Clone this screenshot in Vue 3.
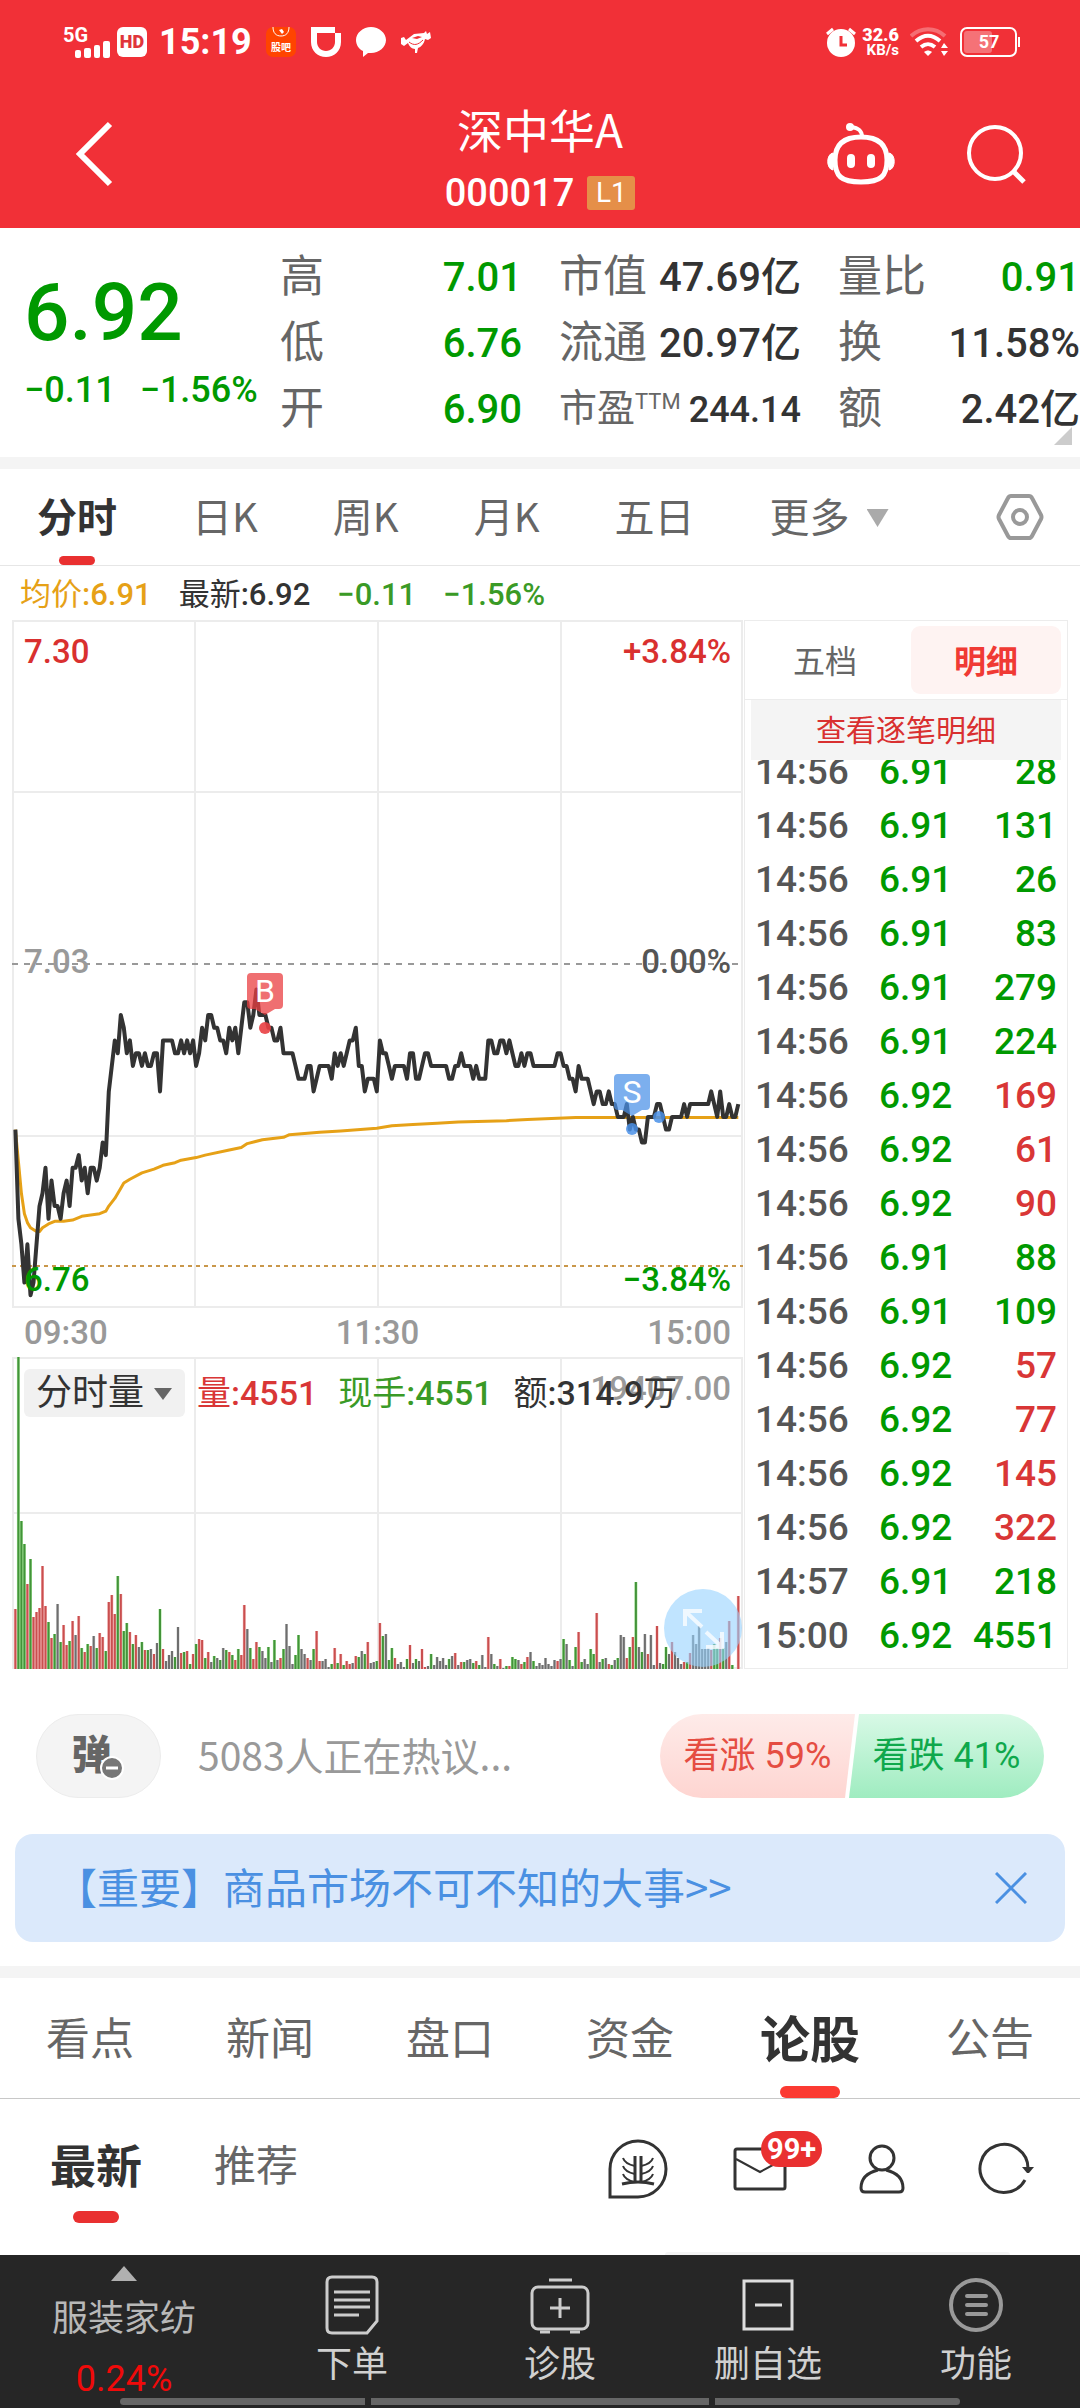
<template>
  <div class="page">
    <header class="header">
      <div class="status">
        <svg class="signal" viewBox="0 0 48 36" aria-label="5G">
          <text x="0" y="18" class="signal-text">5G</text>
          <rect x="12" y="26" width="6" height="8" rx="2" />
          <rect x="21" y="24" width="7" height="10" rx="2" />
          <rect x="31" y="21" width="6" height="13" rx="2" />
          <rect x="40" y="17" width="7" height="17" rx="2" />
        </svg>
        <span class="hd">HD</span>
        <span class="clock">15:19</span>
        <svg class="app" viewBox="0 0 30 30">
          <rect width="30" height="30" rx="7" fill="#ff4400" />
          <path d="M7 0c0 6 3 9 8 9s8-3 8-9" fill="none" stroke="#fff" stroke-width="1" />
          <path d="M13 3l3-1 2 3-2 2z" fill="#fff" />
          <text x="15" y="24" class="app-text">股吧</text>
        </svg>
        <svg class="app" viewBox="0 0 30 30">
          <path d="M0 0h24v6h6v9c0 9-7 15-15 15S0 24 0 15zM6 6v9c0 5 4 9 9 9s9-4 9-9V6z" fill="#fff" fill-rule="evenodd" />
        </svg>
        <svg class="app" viewBox="0 0 30 30">
          <path d="M15 0c8 0 15 6 15 13s-7 13-15 13c-1 0-2 0-3 0l-5 4v-6C3 22 0 18 0 13 0 6 7 0 15 0z" fill="#fff" />
        </svg>
        <svg class="app" viewBox="0 0 30 30">
          <path d="M0 11l3-1 2 3 8-6 10-1 2-2 1 3 3-2 1 6-3 2-3-1c-1 5-4 8-7 9l-1 5h-2v-4c-3 0-6-3-7-6l-4 3-3-2z" fill="#fff" />
          <path d="M11 11l6-2 4 1-5 2z" fill="#f13037" />
          <path d="M8 15c5 4 9 3 14-2" fill="none" stroke="#f13037" stroke-width="1" />
        </svg>
        <div class="status-right">
          <svg class="app" viewBox="0 0 30 30">
            <circle cx="15" cy="16" r="14" fill="#fff" />
            <path d="M1 7l6-5M29 7l-6-5" stroke="#fff" stroke-width="3" />
            <path d="M15 9v9h6" fill="none" stroke="#f13037" stroke-width="3" />
          </svg>
          <span class="speed"><b>32.6</b><small>KB/s</small></span>
          <svg class="wifi" viewBox="0 0 38 30" fill="none" stroke-width="4">
            <path d="M1 9c10-9 24-9 34 0" stroke="#fff" opacity=".3" />
            <path d="M6 14c8-7 16-7 24 0M11 20c5-4 9-4 14 0" stroke="#fff" />
            <path d="M14 25c3-2 5-2 8 0l-4 4z" fill="#fff" />
            <path d="M31 21l3-5 4 5zM31 24h7l-4 5z" fill="#fff" />
          </svg>
          <svg class="battery" viewBox="0 0 60 30">
            <rect x="1" y="1" width="55" height="28" rx="6" fill="none" stroke="#fff" stroke-width="2" />
            <rect x="4" y="4" width="28" height="22" rx="3" fill="#fff" opacity=".32" />
            <rect x="58" y="10" width="2" height="10" fill="#fff" />
            <text x="29" y="21" class="battery-text">57</text>
          </svg>
        </div>
      </div>
      <div class="title-bar">
        <button class="back" aria-label="返回">
          <svg viewBox="0 0 40 66"><path d="M36 3L6 33l30 30" fill="none" stroke="#fff" stroke-width="6" /></svg>
        </button>
        <div class="title">
          <h1>深中华A</h1>
          <p><span class="num">000017</span><span class="level">L1</span></p>
        </div>
        <div class="title-actions">
          <button aria-label="智能助手">
            <svg class="robot" viewBox="0 0 70 64" fill="none" stroke="#fff" stroke-width="5">
              <path d="M35 15C16 15 9 24 9 38c0 16 6 22 26 22s26-6 26-22c0-14-7-23-26-23z" />
              <path d="M36 15c0-6-3-9-11-10" stroke-width="4" />
              <circle cx="24" cy="5" r="4" fill="#fff" stroke="none" />
              <path d="M7 31c-7 1-7 16 0 17zM63 31c7 1 7 16 0 17z" fill="#fff" stroke-width="1" />
              <path d="M25 36v6M45 36v6" stroke-width="8" stroke-linecap="round" />
            </svg>
          </button>
          <button aria-label="搜索">
            <svg class="search" viewBox="0 0 60 60" fill="none" stroke="#fff">
              <circle cx="29" cy="29" r="26" stroke-width="4" />
              <path d="M48 48l10 10" stroke-width="5" />
            </svg>
          </button>
        </div>
      </div>
    </header>

    <section class="quote">
      <div class="price">
        <strong>6.92</strong>
        <p><span>−0.11</span><span>−1.56%</span></p>
      </div>
      <dl class="stats">
        <div v-for="s in stats" :key="s.label">
          <dt :class="{ small: s.sup }">{{ s.label }}<sup v-if="s.sup">{{ s.sup }}</sup></dt>
          <dd :class="{ green: s.green, small: s.sup }">{{ s.value }}</dd>
        </div>
      </dl>
      <i class="corner"></i>
    </section>

    <nav class="periods">
      <button
        v-for="p in periods"
        :key="p"
        :class="{ active: p === period }"
        @click="period = p"
      >{{ p }}</button>
      <button class="more">更多<i class="caret"></i></button>
      <button class="gear" aria-label="设置">
        <svg viewBox="0 0 48 48" fill="none" stroke="#999" stroke-width="4">
          <path d="M15 3h18q2 0 3 2l9 17q1 2 0 4l-9 17q-1 2-3 2H15q-2 0-3-2L3 26q-1-2 0-4l9-17q1-2 3-2z" />
          <circle cx="24" cy="24" r="7" />
        </svg>
      </button>
    </nav>

    <p class="summary">
      <span class="avg">均价<b>:6.91</b></span>
      <span>最新<b>:6.92</b></span>
      <span class="soft-green"><b>−0.11</b></span>
      <span class="soft-green"><b>−1.56%</b></span>
    </p>

    <main class="market">
      <div class="charts">
        <svg class="chart" viewBox="0 0 731 688">
          <path class="grid" d="M1 1h729v686H1zM183 0v688M366 0v688M549 0v688M0 172h731M0 516h731" />
          <path d="M0 344h731" stroke="#999" stroke-width="2" stroke-dasharray="6 6" />
          <path d="M0 646h731" stroke="#c9974a" stroke-width="2" stroke-dasharray="4 4" />
          <polyline :points="avgLine" class="line avg-line" />
          <polyline :points="priceLine" class="line price-line" />
          <text x="12" y="43" fill="#d9302f">7.30</text>
          <text x="719" y="43" fill="#d9302f" text-anchor="end">+3.84%</text>
          <text x="12" y="353" fill="#999">7.03</text>
          <text x="719" y="353" fill="#555" text-anchor="end">0.00%</text>
          <text x="12" y="671" fill="#090">6.76</text>
          <text x="719" y="671" fill="#090" text-anchor="end">−3.84%</text>
          <g fill="#e93f42">
            <path d="M239 353h28q4 0 4 4v28q0 4-4 4h-4l-10 6-10-6h-4q-4 0-4-4v-28q0-4 4-4z" opacity=".75" />
            <circle cx="253" cy="408" r="6" opacity=".9" />
          </g>
          <g fill="#4a90e8">
            <path d="M606 454h28q4 0 4 4v28q0 4-4 4h-4l-10 6-10-6h-4q-4 0-4-4v-28q0-4 4-4z" opacity=".72" />
            <circle cx="620" cy="509" r="6" opacity=".85" />
            <circle cx="647" cy="497" r="6" opacity=".85" />
          </g>
          <text x="253" y="382" class="mark">B</text>
          <text x="620" y="483" class="mark">S</text>
        </svg>
        <div class="times"><span>09:30</span><span>11:30</span><span>15:00</span></div>
        <div class="volume">
          <svg class="chart" viewBox="0 0 731 312">
            <path class="grid" d="M1 1h729v310H1zM183 0v312M366 0v312M549 0v312M0 156h731" />
            <text x="719" y="43" fill="#999" text-anchor="end">19407.00</text>
            <g v-for="b in volumeBars" :key="b.key">
              <path :d="b.d" :stroke="b.light" stroke-width="3" />
              <path :d="b.d" :stroke="b.dark" stroke-width="2" />
            </g>
          </svg>
          <div class="volume-info">
            <button>分时量<i class="caret dark"></i></button>
            <span class="red">量<b>:4551</b></span>
            <span class="soft-green">现手<b>:4551</b></span>
            <span>额<b>:314.9</b>万</span>
          </div>
          <button class="expand" aria-label="全屏">
            <svg viewBox="0 0 78 78" fill="none" stroke="#fff" stroke-width="4" opacity=".75">
              <path d="M21 37V22h17M22 23l16 15M58 43v15H42M57 57L42 43" />
            </svg>
          </button>
        </div>
      </div>

      <aside class="ticks">
        <div class="tick-tabs">
          <button>五档</button>
          <button class="active">明细</button>
        </div>
        <button class="all-ticks">查看逐笔明细</button>
        <div class="tick-list">
          <table>
            <tbody>
              <tr v-for="(t, i) in ticks" :key="i">
                <td>{{ t[0] }}</td>
                <td class="green">{{ t[1] }}</td>
                <td :class="t[3] ? 'red' : 'green'">{{ t[2] }}</td>
              </tr>
            </tbody>
          </table>
        </div>
      </aside>
    </main>

    <section class="talk">
      <button class="bullet" aria-label="弹幕">
        <b>弹</b>
        <svg viewBox="0 0 24 24">
          <circle cx="12" cy="12" r="11" fill="#777" stroke="#fff" stroke-width="2" />
          <path d="M6 12h12" stroke="#fff" stroke-width="3" />
        </svg>
      </button>
      <p>5083人正在热议...</p>
      <div class="vote">
        <button class="up">看涨 59%</button>
        <button class="down">看跌 41%</button>
      </div>
    </section>

    <div v-if="showNotice" class="notice">
      <a href="#">【重要】商品市场不可不知的大事&gt;&gt;</a>
      <button aria-label="关闭" @click="showNotice = false">
        <svg viewBox="0 0 32 32"><path d="M1 1l30 30M31 1L1 31" stroke="#4a90e2" stroke-width="3" /></svg>
      </button>
    </div>

    <nav class="sections">
      <button
        v-for="s in sections"
        :key="s"
        :class="{ active: s === section }"
        @click="section = s"
      >{{ s }}</button>
    </nav>

    <div class="feed-bar">
      <button class="active">最新</button>
      <button>推荐</button>
      <div class="feed-icons">
        <button aria-label="话题">
          <svg viewBox="0 0 60 60" fill="none" stroke="#333" stroke-width="3">
            <path d="M2 58V30a28 28 0 1 1 28 28z" />
            <path d="M27 44V17M33 44V17M14 45q16-4 32 0" />
            <path d="M15 19q2 6 12 8M15 27q2 6 12 8M15 35q2 6 12 8M45 19q-2 6-12 8M45 27q-2 6-12 8M45 35q-2 6-12 8" stroke-width="2" />
          </svg>
        </button>
        <button aria-label="消息">
          <svg viewBox="0 0 60 60" fill="none" stroke="#333" stroke-width="3">
            <rect x="5" y="10" width="50" height="40" rx="2" />
            <path d="M6 20l24 13 24-13" stroke-width="2" />
          </svg>
          <span class="badge">99+</span>
        </button>
        <button aria-label="我的">
          <svg viewBox="0 0 60 60" fill="none" stroke="#333" stroke-width="3">
            <circle cx="30" cy="19" r="12" />
            <path d="M26 31C14 34 9 40 9 49q0 4 4 4h34q4 0 4-4c0-9-5-15-17-18" />
          </svg>
        </button>
        <button aria-label="刷新">
          <svg viewBox="0 0 60 60" fill="none" stroke="#333" stroke-width="3">
            <path d="M51 41A24 24 0 1 1 54 30" />
            <path d="M48 28h12l-5 6h-2z" fill="#333" stroke="none" />
          </svg>
        </button>
      </div>
      <i class="next-card"></i>
    </div>

    <footer class="toolbar">
      <button class="board">
        <i class="caret-up"></i>
        <span>服装家纺</span>
        <em>0.24%</em>
      </button>
      <button>
        <svg viewBox="0 0 60 60" fill="none" stroke="#ccc" stroke-width="3">
          <path d="M10 2h40q5 0 5 5v39L45 58H10q-5 0-5-5V7q0-5 5-5z" />
          <path d="M12 17h36M12 25h36M12 32h36M12 40h25" />
        </svg>
        下单
      </button>
      <button>
        <svg viewBox="0 0 60 60" fill="none" stroke="#ccc" stroke-width="3">
          <rect x="2" y="12" width="56" height="42" rx="6" />
          <path d="M19 5h23M30 23v20M20 33h20M10 57h10M40 57h10" />
        </svg>
        诊股
      </button>
      <button>
        <svg viewBox="0 0 60 60" fill="none" stroke="#ddd" stroke-width="3">
          <path d="M6 6h48v48H6zM17 30h27" />
        </svg>
        删自选
      </button>
      <button>
        <svg viewBox="0 0 60 60" fill="none" stroke="#999" stroke-width="4">
          <circle cx="30" cy="30" r="25" />
          <path d="M21 21h19M21 30h19M21 39h19" stroke-linecap="round" />
        </svg>
        功能
      </button>
      <div class="home-bar"><i></i><i></i><i></i></div>
    </footer>
  </div>
</template>

<script setup>
import { ref } from 'vue';

const stats = [
  { label: '高', value: '7.01', green: true },
  { label: '市值', value: '47.69亿' },
  { label: '量比', value: '0.91', green: true },
  { label: '低', value: '6.76', green: true },
  { label: '流通', value: '20.97亿' },
  { label: '换', value: '11.58%' },
  { label: '开', value: '6.90', green: true },
  { label: '市盈', sup: 'TTM', value: '244.14' },
  { label: '额', value: '2.42亿' },
];

const periods = ['分时', '日K', '周K', '月K', '五日'];
const period = ref('分时');

const sections = ['看点', '新闻', '盘口', '资金', '论股', '公告'];
const section = ref('论股');

const showNotice = ref(true);

// time, price, volume, bought
const ticks = [
  ['14:56', '6.91', 28, false],
  ['14:56', '6.91', 131, false],
  ['14:56', '6.91', 26, false],
  ['14:56', '6.91', 83, false],
  ['14:56', '6.91', 279, false],
  ['14:56', '6.91', 224, false],
  ['14:56', '6.92', 169, true],
  ['14:56', '6.92', 61, true],
  ['14:56', '6.92', 90, true],
  ['14:56', '6.91', 88, false],
  ['14:56', '6.91', 109, false],
  ['14:56', '6.92', 57, true],
  ['14:56', '6.92', 77, true],
  ['14:56', '6.92', 145, true],
  ['14:56', '6.92', 322, true],
  ['14:57', '6.91', 218, false],
  ['15:00', '6.92', 4551, false],
];

// cents below the previous close, one value per minute
const cents = [
  13, 20, 22, 25, 22, 26, 25, 22, 19, 18, 16, 20, 17, 19, 19, 20, 18, 17, 19, 16,
  16, 15, 17, 16, 18, 16, 16, 17, 16, 14, 15, 10, 8, 6, 7, 4, 5, 7, 6, 8,
  7, 7, 8, 7, 8, 8, 7, 7, 10, 6, 6, 6, 6, 7, 7, 6, 7, 6, 7, 6,
  8, 7, 5, 6, 4, 4, 5, 5, 6, 6, 7, 5, 6, 5, 7, 5, 3, 3, 5, 4,
  2, 4, 4, 4, 5, 5, 6, 6, 5, 7, 7, 7, 7, 8, 9, 9, 9, 8, 8, 10,
  9, 8, 8, 8, 8, 9, 7, 8, 7, 8, 7, 6, 6, 5, 8, 8, 10, 9, 9, 9,
  10, 6, 7, 7, 8, 9, 8, 8, 8, 8, 9, 7, 7, 9, 9, 8, 7, 7, 8, 8,
  8, 8, 8, 8, 9, 9, 8, 8, 7, 8, 8, 8, 9, 8, 9, 9, 9, 6, 6, 7,
  7, 6, 6, 7, 6, 7, 8, 8, 7, 8, 7, 7, 8, 8, 8, 8, 8, 8, 8, 8,
  7, 7, 8, 8, 9, 9, 10, 8, 9, 9, 9, 10, 11, 10, 10, 11, 11, 10, 11, 11,
  12, 12, 12, 11, 13, 12, 13, 13, 14, 14, 12, 12, 12, 11, 11, 12, 13, 13, 12, 12,
  12, 12, 11, 12, 11, 11, 11, 11, 11, 11, 11, 10, 11, 12, 10, 12, 12, 11, 12, 12,
  11,
];

// [minute, cents below the previous close]
const average = [
  [0, 13], [1, 15.5], [2, 18], [3, 19.6], [4, 20.3], [5, 20.7], [7, 21], [8, 21],
  [9, 20.7], [11, 20.4], [13, 20.2], [16, 20.2], [19, 20.1], [22, 19.8], [25, 19.7],
  [28, 19.6], [30, 19.4], [31, 19], [33, 18.4], [35, 17.6], [36, 17.2], [38, 16.9],
  [42, 16.4], [46, 16.1], [49, 15.8], [53, 15.6], [55, 15.4], [60, 15.2], [63, 15],
  [71, 14.6], [75, 14.4], [77, 14.1], [82, 13.8], [89, 13.6], [91, 13.4], [101, 13.2],
  [108, 13.1], [120, 12.9], [125, 12.7], [132, 12.6], [140, 12.5], [147, 12.4],
  [163, 12.3], [170, 12.2], [186, 12.05], [240, 12.05],
];

const minuteX = (m) => 3.4 + m * 3.012;
const point = (m, c) => `${minuteX(m).toFixed(1)},${(344 + c * 12.74).toFixed(1)}`;

const priceLine = cents.map((c, m) => point(m, c)).join(' ');
const avgLine = average.map(([m, c]) => point(m, c)).join(' ');

// r: up, g: down, k: flat
const volumes = (
  'r60 g312 g148 g125 r85 g110 r52 r57 r61 r103 r63 g47 r31 g35 k65 g27 r44 r24 g28 r48 k34 r53 g21 r17 g25 r23 k33 g21 r36 r32 ' +
  'g18 r67 r74 r55 g93 r75 g38 g46 r37 g25 r34 k22 g27 r19 g19 k20 r15 k26 g60 r20 k8 k14 k18 g12 k42 r16 g17 r18 g5 r15 ' +
  'g25 r30 r29 g11 r17 k7 g13 k11 g9 k21 g19 r17 g14 r9 g20 r14 r64 k40 g21 r10 r27 g22 k18 k11 g22 k7 g29 k9 r11 g20 ' +
  'k45 k23 k5 g14 g34 k20 k15 r11 k9 g20 r38 r8 k8 k10 k2 g5 r21 g6 r15 g4 r8 r5 k6 r13 g12 k18 g15 r27 k6 k7 ' +
  'g8 r46 g33 k35 g9 g21 r11 k5 k7 k2 g10 r24 k6 g10 k8 r20 r2 k3 g15 k4 k12 k8 k11 k4 g10 k13 r16 k4 r7 g7 ' +
  'k9 k10 g6 r8 g4 k14 k2 r32 k15 g5 k3 r10 k1 g3 r3 g12 g10 k9 r5 g7 r12 k17 g8 k3 k6 k4 k11 k5 k3 k9 ' +
  'r8 k10 g30 k25 g9 k3 g22 r37 g7 k10 k5 g20 g15 r56 k7 g10 k11 r5 g4 k9 g11 k34 k32 r11 g22 r32 g87 k22 g17 k35 ' +
  'r15 k34 k4 r43 k6 g5 g22 k15 r27 k17 k11 k5 r7 g7 r16 k34 k25 k43 k20 k20 k21 r19 g25 g21 r31 g21 k27 r48 g4 k0 r73'
).split(' ');

const barColors = {
  r: { dark: '#c94f4f', light: '#f6bcbc' },
  g: { dark: '#43933a', light: '#a8e59b' },
  k: { dark: '#6e6e6e', light: '#cfcfcf' },
};

const volumeBars = Object.entries(barColors).map(([key, colors]) => ({
  key,
  ...colors,
  d: volumes
    .map((v, m) => (v[0] === key ? `M${minuteX(m).toFixed(1)} 312v-${v.slice(1)}` : ''))
    .join(''),
}));
</script>

<style>
body {
  margin: 0;
  background: #fff;
}
</style>

<style scoped>
.page {
  font-family: "Noto Sans CJK SC", sans-serif;
  color: #333;
  background: #fff;
}
h1, p, dl, dd {
  margin: 0;
}
button {
  margin: 0;
  padding: 0;
  border: 0;
  background: none;
  color: inherit;
  font: inherit;
  cursor: pointer;
}
svg {
  display: block;
}
.green {
  color: #090;
}
.red {
  color: #d93636;
}
.soft-green {
  color: #3a9a26;
}

/* header */
.header {
  background: #f13037;
  color: #fff;
}
.status {
  display: flex;
  align-items: center;
  height: 84px;
  padding: 0 60px 0 63px;
  font-family: Roboto, sans-serif;
}
.signal {
  width: 48px;
  height: 36px;
  fill: #fff;
  overflow: visible;
}
.signal-text {
  font: 700 20px Roboto, sans-serif;
}
.hd {
  width: 30px;
  margin: 0 12px 0 6px;
  border-radius: 6px;
  background: #fff;
  color: #e0353b;
  font-size: 18px;
  font-weight: 900;
  line-height: 30px;
  text-align: center;
}
.clock {
  font-size: 36px;
  font-weight: 700;
  margin-right: 14px;
}
.app {
  width: 30px;
  height: 30px;
  margin-right: 15px;
}
.app-text {
  font: 700 10px "Noto Sans CJK SC", sans-serif;
  fill: #fff;
  text-anchor: middle;
}
.status-right {
  display: flex;
  align-items: center;
  margin-left: auto;
}
.status-right .app {
  margin-right: 6px;
}
.speed {
  display: flex;
  flex-direction: column;
  align-items: flex-end;
  margin-right: 11px;
  font-weight: 700;
}
.speed b {
  font-size: 18px;
  line-height: 16px;
}
.speed small {
  font-size: 15px;
  line-height: 14px;
}
.wifi {
  width: 38px;
  height: 30px;
  margin-right: 12px;
}
.battery {
  width: 60px;
  height: 30px;
}
.battery-text {
  font: 700 18px Roboto, sans-serif;
  fill: #fff;
  text-anchor: middle;
}
.title-bar {
  display: grid;
  grid-template-columns: 1fr auto 1fr;
  align-items: center;
  height: 140px;
  padding: 0 54px 4px 74px;
}
.back svg {
  width: 40px;
  height: 66px;
}
.title {
  margin-right: 20px;
  text-align: center;
}
.title h1 {
  font-size: 46px;
  font-weight: 400;
  line-height: 78px;
}
.title p {
  display: flex;
  align-items: center;
  justify-content: center;
  gap: 13px;
}
.num {
  font: 500 38px/52px Roboto, sans-serif;
}
.level {
  width: 48px;
  border-radius: 3px;
  background: #e58f48;
  font: 400 28px/34px Roboto, sans-serif;
}
.title-actions {
  display: flex;
  align-items: center;
  justify-content: flex-end;
  gap: 70px;
}
.robot {
  width: 70px;
  height: 64px;
}
.search {
  width: 60px;
  height: 60px;
}

/* quote */
.quote {
  position: relative;
  display: flex;
  border-bottom: 12px solid #f4f4f4;
}
.price {
  flex: none;
  width: 256px;
  padding: 37px 0 0 24px;
  color: #090;
  font-family: Roboto, sans-serif;
  font-weight: 500;
  white-space: nowrap;
}
.price strong {
  display: block;
  font-size: 80px;
  font-weight: 500;
  line-height: 96px;
}
.price p {
  display: flex;
  gap: 24px;
  font-size: 36px;
  line-height: 58px;
}
.stats {
  flex: 1;
  display: grid;
  grid-template-columns: repeat(3, 1fr);
  column-gap: 37px;
  padding: 15px 0 16px;
}
.stats div {
  display: flex;
  justify-content: space-between;
  height: 66px;
  white-space: nowrap;
}
.stats dt {
  color: #666;
  font-size: 44px;
  line-height: 60px;
}
.stats dt.small {
  font-size: 38px;
}
.stats sup {
  font: 400 22px/20px Roboto, sans-serif;
  vertical-align: 12px;
}
.stats dd {
  font-family: Roboto, "Noto Sans CJK SC", sans-serif;
  font-size: 40px;
  font-weight: 500;
  line-height: 70px;
}
.stats dd.small {
  font-size: 36px;
}
.corner {
  position: absolute;
  right: 8px;
  bottom: 12px;
  width: 18px;
  height: 18px;
  background: #ccc;
  clip-path: polygon(100% 0, 100% 100%, 0 100%);
}

/* periods */
.periods {
  display: flex;
  align-items: center;
  gap: 75px;
  height: 96px;
  padding: 0 36px 0 37px;
  border-bottom: 1px solid #e6e6e6;
  color: #666;
  font-size: 40px;
}
.periods button {
  position: relative;
  height: 96px;
  padding-bottom: 4px;
}
.periods .active {
  color: #333;
  font-weight: 700;
}
.periods .active::after {
  content: "";
  position: absolute;
  left: 50%;
  bottom: 0;
  width: 36px;
  height: 9px;
  margin-left: -18px;
  border-radius: 5px;
  background: #e93030;
}
.caret {
  display: inline-block;
  width: 22px;
  height: 18px;
  margin-left: 17px;
  background: #aaa;
  clip-path: polygon(0 0, 100% 0, 50% 100%);
  vertical-align: 5px;
}
.caret.dark {
  width: 18px;
  height: 12px;
  margin-left: 10px;
  background: #666;
}
.periods .gear {
  display: flex;
  align-items: center;
  margin-left: auto;
  padding-bottom: 0;
}
.gear svg {
  width: 48px;
  height: 48px;
}
.summary {
  display: flex;
  gap: 27px;
  padding: 4px 0 0 20px;
  font-family: Roboto, "Noto Sans CJK SC", sans-serif;
  font-size: 31px;
  line-height: 50px;
}
.summary b,
.volume-info b {
  font-weight: 500;
}
.avg {
  color: #e6a117;
}

/* charts */
.market {
  display: grid;
  grid-template-columns: 731fr 325fr;
  padding: 0 12px;
}
.chart {
  width: 100%;
  height: auto;
}
.chart text {
  font: 500 33px Roboto, sans-serif;
}
.chart .mark {
  font: 400 32px Roboto, sans-serif;
  fill: #fff;
  text-anchor: middle;
}
.grid {
  fill: none;
  stroke: #ececec;
  stroke-width: 2;
}
.line {
  fill: none;
  stroke-linejoin: round;
}
.avg-line {
  stroke: #e6a117;
  stroke-width: 3;
}
.price-line {
  stroke: #333;
  stroke-width: 4;
}
.times {
  display: flex;
  justify-content: space-between;
  padding: 1px 12px 0;
  color: #999;
  font: 500 33px/48px Roboto, sans-serif;
}
.volume {
  position: relative;
}
.volume-info {
  position: absolute;
  top: 12px;
  left: 12px;
  display: flex;
  align-items: center;
  font-family: Roboto, "Noto Sans CJK SC", sans-serif;
  font-size: 34px;
  line-height: 48px;
  white-space: nowrap;
}
.volume-info span {
  margin-right: 21px;
}
.volume-info button {
  height: 48px;
  margin-right: 12px;
  padding: 0 13px 0 12px;
  border-radius: 6px;
  background: #f1f1f1;
  font-size: 36px;
}
.expand {
  position: absolute;
  right: 1px;
  bottom: 2px;
  width: 78px;
  height: 78px;
  border-radius: 50%;
  background: rgba(150, 210, 255, 0.6);
}

/* ticks */
.ticks {
  display: flex;
  flex-direction: column;
  margin-left: 1px;
  border: 1px solid #ececec;
}
.tick-tabs {
  display: grid;
  grid-template-columns: 160fr 150fr;
  padding: 5px 6px;
  border-bottom: 1px solid #ececec;
  color: #666;
  font-size: 32px;
  line-height: 68px;
}
.tick-tabs button {
  padding: 0 12px 2px 0;
  line-height: 66px;
}
.tick-tabs .active {
  padding-right: 0;
  border-radius: 9px;
  background: #fef3f2;
  color: #f03a34;
  font-weight: 700;
}
.all-ticks {
  margin: 0 6px;
  padding-bottom: 4px;
  background: #f4f4f4;
  color: #d93030;
  font-size: 30px;
  line-height: 56px;
}
.tick-list {
  flex: 1 1 0;
  min-height: 0;
  display: flex;
  flex-direction: column;
  justify-content: flex-end;
  overflow: hidden;
  padding: 0 10px 5px;
}
table {
  border-collapse: collapse;
  color: #555;
  font: 500 37px/54px Roboto, sans-serif;
}
td {
  padding: 0;
  height: 54px;
}
td:first-child {
  width: 124px;
}
td:last-child {
  text-align: right;
}

/* talk */
.talk {
  display: flex;
  align-items: center;
  margin-top: 45px;
  padding: 0 36px;
}
.bullet {
  position: relative;
  width: 125px;
  height: 84px;
  padding: 0 14px 8px 0;
  border: 1px solid #ececec;
  border-radius: 42px;
  background: #f4f4f4;
  color: #666;
  font-size: 40px;
  line-height: 60px;
}
.bullet b {
  font-weight: 900;
}
.bullet svg {
  position: absolute;
  right: 36px;
  bottom: 17px;
  width: 24px;
  height: 24px;
}
.talk p {
  margin-left: 37px;
  color: #999;
  font-size: 39px;
  line-height: 80px;
  padding-bottom: 4px;
}
.vote {
  display: flex;
  width: 384px;
  margin-left: auto;
  border-radius: 42px;
  overflow: hidden;
  font-family: Roboto, "Noto Sans CJK SC", sans-serif;
  font-size: 36px;
  line-height: 84px;
}
.vote button {
  flex: 1;
}
.up {
  background: linear-gradient(#feebe9, #fed5d1);
  color: #e54d42;
  clip-path: polygon(0 0, 100% 0, calc(100% - 10px) 100%, 0 100%);
}
.vote .down {
  margin-left: -6px;
  background: linear-gradient(#d8f9e6, #9fecc0);
  color: #0fa84c;
  clip-path: polygon(10px 0, 100% 0, 100% 100%, 0 100%);
}
.notice {
  display: flex;
  align-items: center;
  justify-content: space-between;
  margin: 36px 15px 24px;
  padding: 0 38px 0 40px;
  border-radius: 18px;
  background: #dbe9fb;
}
.notice a {
  padding-bottom: 4px;
  color: #4a90e2;
  font-size: 42px;
  line-height: 104px;
  text-decoration: none;
}
.notice svg {
  width: 32px;
  height: 32px;
}

/* sections */
.sections {
  display: grid;
  grid-template-columns: repeat(6, 1fr);
  border-top: 12px solid #f4f4f4;
  border-bottom: 1px solid #c8c8c8;
  color: #666;
  font-size: 44px;
}
.sections button {
  position: relative;
  height: 120px;
  padding-bottom: 4px;
}
.sections .active {
  color: #333;
  font-size: 50px;
  font-weight: 700;
}
.sections .active::after,
.feed-bar .active::after {
  content: "";
  position: absolute;
  left: 50%;
  bottom: 0;
  width: 60px;
  height: 12px;
  margin-left: -30px;
  border-radius: 6px;
  background: #fb3a32;
}
.feed-bar {
  position: relative;
  display: flex;
  align-items: center;
  gap: 72px;
  height: 124px;
  padding: 0 46px 32px 50px;
  color: #666;
  font-size: 42px;
}
.feed-bar > button {
  position: relative;
  height: 124px;
  padding-top: 3px;
}
.feed-bar .active {
  color: #333;
  font-size: 46px;
  font-weight: 700;
}
.feed-bar .active::after {
  width: 46px;
  margin-left: -23px;
  background: #e93030;
}
.feed-icons {
  display: flex;
  gap: 62px;
  margin-left: auto;
  padding-top: 16px;
}
.feed-icons button {
  position: relative;
}
.feed-icons svg {
  width: 60px;
  height: 60px;
}
.badge {
  position: absolute;
  top: -8px;
  left: 31px;
  padding: 0 6px;
  border-radius: 18px;
  background: #e93030;
  color: #fff;
  font: 700 29px/36px Roboto, sans-serif;
}
.next-card {
  position: absolute;
  right: 70px;
  bottom: 0;
  width: 345px;
  height: 3px;
  border-radius: 3px 3px 0 0;
  background: #f4f4f4;
}

/* toolbar */
.toolbar {
  position: relative;
  display: grid;
  grid-template-columns: 248fr 208fr 208fr 208fr 208fr;
  height: 153px;
  background: #262626;
  color: #d0d0d0;
  font-size: 36px;
  line-height: 52px;
}
.toolbar button {
  display: flex;
  flex-direction: column;
  align-items: center;
  padding-top: 20px;
}
.toolbar svg {
  width: 60px;
  height: 60px;
}
.toolbar .board {
  padding-top: 11px;
  color: #b8b8b8;
}
.caret-up {
  width: 26px;
  height: 15px;
  margin-bottom: 8px;
  background: #b0b0b0;
  clip-path: polygon(50% 0, 100% 100%, 0 100%);
}
.board em {
  color: #f00a0a;
  font: 400 36px/76px Roboto, sans-serif;
}
.home-bar {
  position: absolute;
  left: 120px;
  right: 120px;
  bottom: 3px;
  display: grid;
  grid-template-columns: 245fr 338fr 245fr;
  gap: 6px;
  height: 7px;
  border-radius: 4px;
  overflow: hidden;
}
.home-bar i {
  background: #666;
}
</style>
